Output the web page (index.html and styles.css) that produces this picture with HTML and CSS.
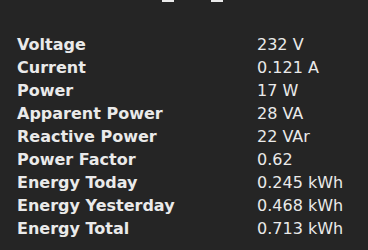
FILE: index.html
```html
<!DOCTYPE html>
<html>
<head>
<meta charset="utf-8">
<link rel="stylesheet" href="styles.css">
</head>
<body>
<div class="top"><span class="mark"></span><span class="mark"></span></div>
<div class="table">
  <div class="k">Voltage</div><div class="v">232 V</div>
  <div class="k">Current</div><div class="v">0.121 A</div>
  <div class="k">Power</div><div class="v">17 W</div>
  <div class="k">Apparent Power</div><div class="v">28 VA</div>
  <div class="k">Reactive Power</div><div class="v">22 VAr</div>
  <div class="k">Power Factor</div><div class="v">0.62</div>
  <div class="k">Energy Today</div><div class="v">0.245 kWh</div>
  <div class="k">Energy Yesterday</div><div class="v">0.468 kWh</div>
  <div class="k">Energy Total</div><div class="v">0.713 kWh</div>
</div>
</body>
</html>
```
FILE: styles.css
```css
html, body {
  margin: 0;
  padding: 0;
  background: #252525;
  color: #eaeaea;
  font-family: "DejaVu Sans", Verdana, sans-serif;
  font-size: 16px;
  width: 368px;
  height: 250px;
  overflow: hidden;
}
.top {
  display: flex;
  gap: 37px;
  padding-left: 162px;
  height: 33px;
}
.mark {
  display: block;
  width: 12px;
  height: 2px;
  background: #eaeaea;
}
.table {
  display: grid;
  grid-template-columns: 240px 1fr;
  grid-auto-rows: 23px;
  padding-left: 17px;
  line-height: 23px;
}
.k {
  font-weight: bold;
}
```
